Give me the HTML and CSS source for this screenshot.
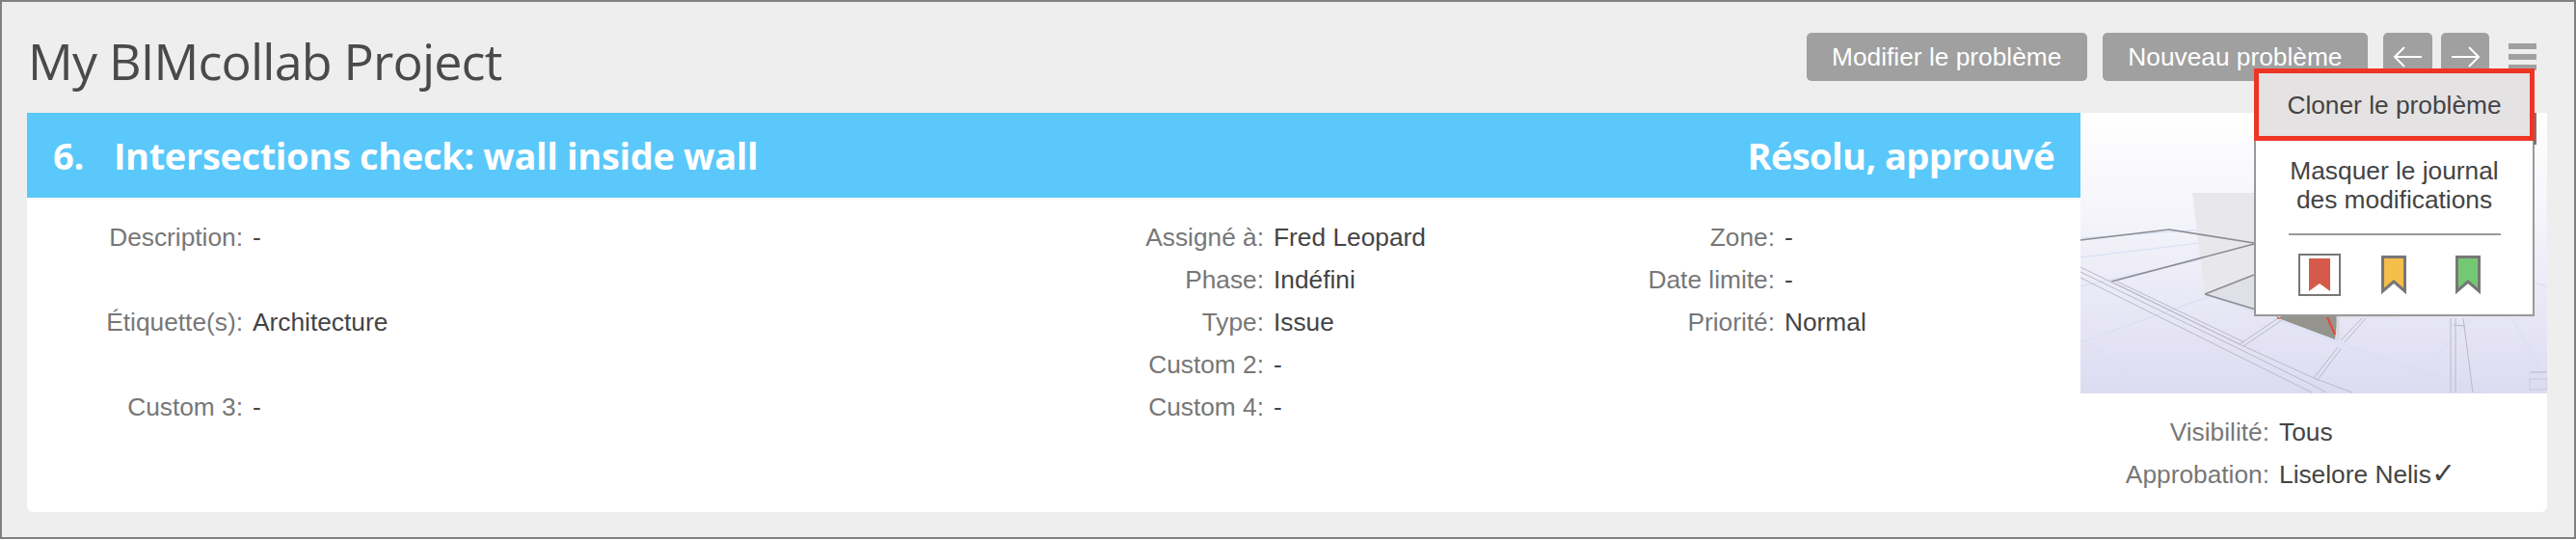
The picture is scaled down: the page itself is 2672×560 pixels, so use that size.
FILE: index.html
```html
<!DOCTYPE html>
<html lang="fr">
<head>
  <meta charset="UTF-8">
  <title>My BIMcollab Project</title>
  <link rel="stylesheet" href="styles.css">
</head>
<body>

  <div class="frame">
    <header class="top">
      <h1>My BIMcollab Project</h1>
      <div class="actions">
        <button class="btn">Modifier le problème</button>
        <button class="btn">Nouveau problème</button>
        <button class="btn arrow">
          <svg width="32" height="28" viewBox="0 0 32 28"><path d="M30 14H2M12 4 2 14l10 10"/></svg>
        </button>
        <button class="btn arrow next">
          <svg width="32" height="28" viewBox="0 0 32 28"><path d="M2 14h28M20 4l10 10-10 10"/></svg>
        </button>
        <div class="burger"><span></span><span></span><span></span></div>
      </div>
    </header>

    <section class="card">
      <div class="main">
        <div class="title-bar">
          <h2><span class="num">6.</span>Intersections check: wall inside wall</h2>
          <div class="status">Résolu, approuvé</div>
        </div>
        <div class="fields">
          <div class="col col-a">
            <div class="row"><span class="lbl">Description:</span><span class="val">-</span></div>
            <div class="row"></div>
            <div class="row"><span class="lbl">Étiquette(s):</span><span class="val">Architecture</span></div>
            <div class="row"></div>
            <div class="row"><span class="lbl">Custom 3:</span><span class="val">-</span></div>
          </div>
          <div class="col col-b">
            <div class="row"><span class="lbl">Assigné à:</span><span class="val">Fred Leopard</span></div>
            <div class="row"><span class="lbl">Phase:</span><span class="val">Indéfini</span></div>
            <div class="row"><span class="lbl">Type:</span><span class="val">Issue</span></div>
            <div class="row"><span class="lbl">Custom 2:</span><span class="val">-</span></div>
            <div class="row"><span class="lbl">Custom 4:</span><span class="val">-</span></div>
          </div>
          <div class="col col-c">
            <div class="row"><span class="lbl">Zone:</span><span class="val">-</span></div>
            <div class="row"><span class="lbl">Date limite:</span><span class="val">-</span></div>
            <div class="row"><span class="lbl">Priorité:</span><span class="val">Normal</span></div>
          </div>
        </div>
      </div>

      <aside class="side">
        <svg class="snapshot" width="484" height="291" viewBox="0 0 484 291">
          <defs>
            <linearGradient id="sky" x1="0" y1="0" x2="0" y2="1">
              <stop offset="0" stop-color="#ffffff"/>
              <stop offset="0.35" stop-color="#f5f5fb"/>
              <stop offset="1" stop-color="#dddbf1"/>
            </linearGradient>
            <filter id="soft"><feGaussianBlur stdDeviation="0.45"/></filter>
          </defs>
          <rect width="484" height="291" fill="url(#sky)"/>
          <g filter="url(#soft)">
            <g fill="none" stroke="#d3def5" stroke-width="1">
              <path d="M0 130 170 118M0 150 180 128M0 180 135 150M0 238 135 190 300 250 420 290M10 238 70 290M330 290 420 200M440 200 480 270M300 130 484 180"/>
            </g>
            <path d="M116 83H330V168H180L129 188Z" fill="#e8e8ec"/>
            <path d="M129 188 180 168H330V213H205Z" fill="#e0e0e8"/>
            <path d="M205 213 264 235 267 211 240 190Z" fill="#94948c"/>
            <path d="M256 212 264 230M205 212v2" fill="none" stroke="#e8452f" stroke-width="2"/>
            <path d="M267 211V236" stroke="#d8d8dc" stroke-width="3"/>
            <g fill="none" stroke="#8b8b92" stroke-width="1.6">
              <path d="M0 132 92 121 180 135M32 175 180 136M129 188 180 168M129 188 205 211"/>
            </g>
            <g fill="none" stroke="#b9b9c8" stroke-width="1">
              <path d="M0 160 165 240 242 275 282 290M0 165 165 245 240 282 255 290M0 171 240 290M32 175 165 240M36 174 170 238"/>
              <path d="M165 240 205 213M169 242 209 215M242 275 267 243M245 278 270 245M270 236 292 213M274 238 296 213"/>
              <path d="M384 213V290M389 213V290M397 213 407 290M387 220 399 221"/>
            </g>
            <rect x="466" y="276" width="18" height="11" fill="none" stroke="#c9c9d2"/>
            <path d="M466 269h18" stroke="#b5b5c0"/>
          </g>
        </svg>
        <div class="side-fields">
          <div class="row"><span class="lbl">Visibilité:</span><span class="val">Tous</span></div>
          <div class="row"><span class="lbl">Approbation:</span><span class="val">Liselore Nelis<span class="tick">✓</span></span></div>
        </div>
      </aside>
    </section>

    <div class="menu">
      <div class="menu-item hot">Cloner le problème</div>
      <div class="menu-item">Masquer le journal<br>des modifications</div>
      <hr>
      <div class="flags">
        <span class="flag-box">
          <svg width="22" height="34" viewBox="0 0 22 34"><path d="M0 0H22V34L11 26 0 34Z" fill="#d65a4a"/></svg>
        </span>
        <svg class="flag" width="26" height="40" viewBox="0 0 26 40"><path d="M1.500 1.500H24.500V37L13 27 1.500 37Z" fill="#f5bd4a" stroke="#777" stroke-width="3"/></svg>
        <svg class="flag" width="26" height="40" viewBox="0 0 26 40"><path d="M1.500 1.500H24.500V37L13 27 1.500 37Z" fill="#75c873" stroke="#777" stroke-width="3"/></svg>
      </div>
    </div>
  </div>

</body>
</html>
```

FILE: styles.css
```css
html, body {
  margin: 0;
  padding: 0;
}

body {
  font-family: "Liberation Sans", Arial, sans-serif;
  font-size: 26.3px;
  color: #444;
  background: #fff;
}

.frame {
  position: relative;
  box-sizing: border-box;
  width: 2672px;
  height: 559px;
  background: #eeeeee;
  border: 2px solid #808080;
  padding: 0 28px 0 26px;
}

.top {
  display: flex;
  justify-content: space-between;
  height: 115px;
}

h1 {
  margin: 27px 0 0 1px;
  font-family: "Open Sans", sans-serif;
  font-size: 52px;
  font-weight: 400;
  letter-spacing: -0.8px;
  line-height: 68px;
  color: #4a4a4a;
}

.actions {
  display: flex;
  align-items: flex-start;
  gap: 16px;
  padding: 32px 11px 0 0;
}

.btn {
  height: 50px;
  padding: 0 26.500px;
  border: none;
  border-radius: 5px;
  background: #a0a0a0;
  color: #fff;
  font: inherit;
  line-height: 50px;
}

.arrow {
  display: flex;
  align-items: center;
  justify-content: center;
  width: 51px;
  padding: 0;
  margin-right: -7px;
}

.next {
  width: 50px;
  margin-right: 4px;
}

.arrow svg path {
  fill: none;
  stroke: #fff;
  stroke-width: 2;
}

.burger {
  display: flex;
  flex-direction: column;
  gap: 5px;
  width: 29px;
  padding-top: 11px;
}

.burger span {
  height: 6px;
  background: #a0a0a0;
}

.card {
  display: flex;
  height: 414px;
  background: #fff;
  border-radius: 0 0 6px 6px;
  overflow: hidden;
}

.main {
  width: 2130px;
}

.title-bar {
  display: flex;
  justify-content: space-between;
  align-items: center;
  height: 88px;
  padding: 0 27px;
  background: #5ac8fa;
  color: #fff;
  font-family: "Open Sans", sans-serif;
  font-size: 38px;
  font-weight: 700;
}

h2 {
  margin: 0;
  font-size: inherit;
  letter-spacing: -0.35px;
}

.status {
  letter-spacing: -0.6px;
}

.num {
  margin-right: 31px;
}

.fields {
  display: flex;
  padding-top: 19px;
}

.row {
  display: flex;
  align-items: center;
  gap: 10px;
  height: 44px;
}

.lbl {
  flex: none;
  text-align: right;
  color: #777;
}

.col-a { width: 1028px; }
.col-a .lbl { width: 224px; }
.col-b { width: 544px; }
.col-b .lbl { width: 255px; }
.col-c .lbl { width: 241px; }

.side {
  width: 484px;
}

.snapshot {
  display: block;
}

.side-fields {
  padding-top: 18px;
}

.side-fields .lbl {
  width: 196px;
}

.tick {
  font-size: 30px;
  line-height: 1;
}

.menu {
  position: absolute;
  left: 2336px;
  top: 69px;
  box-sizing: border-box;
  width: 291px;
  height: 257px;
  background: #fff;
  border: 2px solid #999;
  text-align: center;
}

.menu::before {
  content: "";
  position: absolute;
  right: -4px;
  top: 44px;
  width: 3px;
  height: 33px;
  background: #777;
}

.menu-item {
  line-height: 30px;
  padding-top: 16px;
}

.hot {
  position: relative;
  box-sizing: border-box;
  height: 75px;
  margin: -2px -2px 0;
  padding-top: 0;
  line-height: 66px;
  background: #e4e2e3;
  border: 5px solid #ee3524;
}

.menu hr {
  width: 220px;
  height: 2px;
  margin: 20px auto 0;
  border: none;
  background: #999;
}

.flags {
  display: flex;
  justify-content: center;
  align-items: center;
  padding: 19px 10px 0 0;
}

.flag-box {
  box-sizing: border-box;
  display: flex;
  justify-content: center;
  align-items: center;
  width: 44px;
  height: 44px;
  border: 2px solid #777;
  margin-right: 42px;
}

.flag {
  margin-right: 51px;
}

.flag:last-child {
  margin-right: 0;
}
```
